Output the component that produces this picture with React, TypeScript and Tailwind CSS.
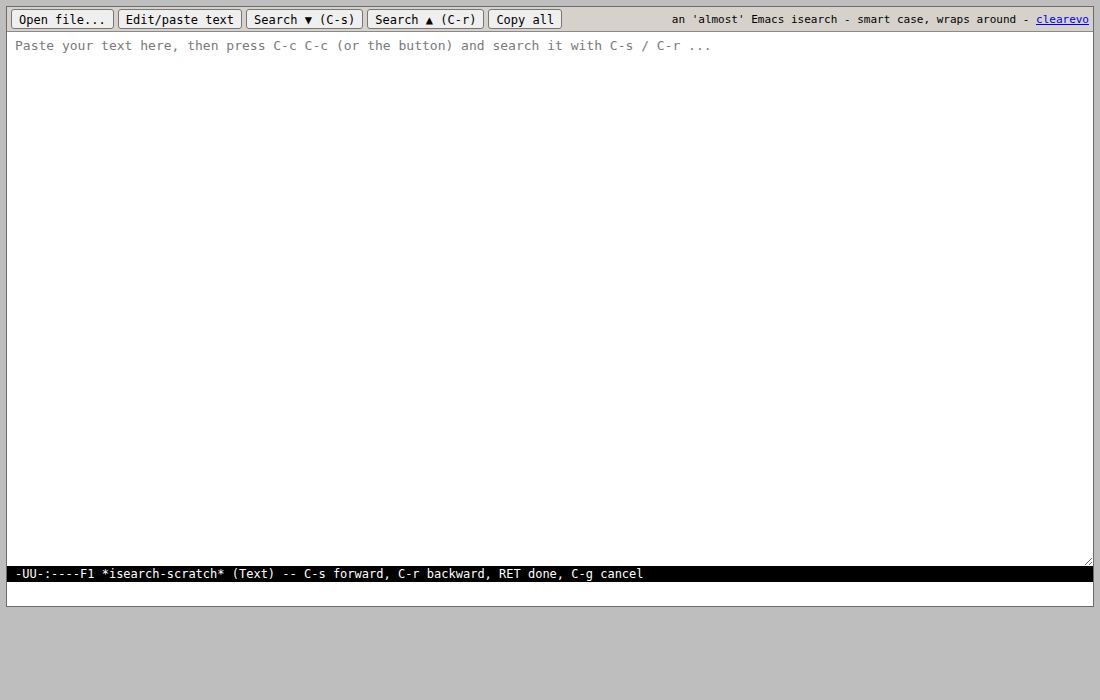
import React from 'react';

const mono = "font-['DejaVu_Sans_Mono','Liberation_Mono',monospace]";

const ToolButton = ({ label }: { label: string }) => (
  <button
    className={`${mono} h-5 px-[7px] pt-[1px] text-[12px] leading-none text-black bg-[#efefef] border border-[#767676] rounded-[3px]`}
  >
    {label}
  </button>
);

const App = () => {
  return (
    <div className="w-[1100px] h-[700px] bg-[#bebebe] pt-[6px] pl-[6px]">
      <div className="w-[1088px] border border-[#6b6b6b] bg-white flex flex-col">
        <div className="h-[25px] bg-[#d6d1cb] border-b border-[#8a8a8a] flex items-center pl-1 pr-1 gap-1">
          <ToolButton label="Open file..." />
          <ToolButton label="Edit/paste text" />
          <ToolButton label="Search ▼ (C-s)" />
          <ToolButton label="Search ▲ (C-r)" />
          <ToolButton label="Copy all" />
          <div className={`${mono} ml-auto mt-[2px] text-[11px] text-black whitespace-pre`}>
            an 'almost' Emacs isearch - smart case, wraps around -{' '}
            <a href="#" className="text-[#0000ee] underline">clearevo</a>
          </div>
        </div>
        <textarea
          className={`${mono} block w-full h-[534px] px-2 pt-[6px] text-[13px] leading-4 text-black placeholder:text-[#7a7a7a] outline-none resize-y border-0`}
          placeholder="Paste your text here, then press C-c C-c (or the button) and search it with C-s / C-r ..."
        />
        <div className={`${mono} h-4 bg-black text-white text-[12px] leading-4 px-2 whitespace-pre`}>
          -UU-:----F1 *isearch-scratch* (Text) -- C-s forward, C-r backward, RET done, C-g cancel
        </div>
        <div className="h-6 bg-white"></div>
      </div>
    </div>
  );
};

export default App;
